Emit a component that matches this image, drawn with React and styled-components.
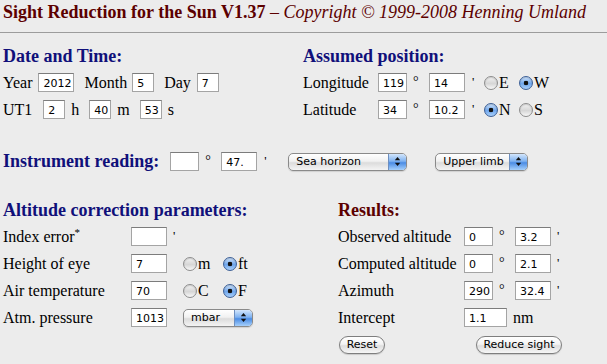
import React from 'react';
import styled, { createGlobalStyle } from 'styled-components';

const GlobalStyle = createGlobalStyle`
  body {
    margin: 0;
    background: #ececec;
    font-family: "Liberation Serif", "Times New Roman", serif;
    font-size: 16px;
    color: #000;
  }
`;

const Page = styled.div`
  padding: 1px 0 0 3px;
  width: 604px;
  height: 363px;
  overflow: hidden;
`;

const Title = styled.h1`
  margin: 0;
  font-size: 18px;
  line-height: 22px;
  font-weight: bold;
  color: #5c0000;
  white-space: nowrap;
`;

const Copyright = styled.span`
  font-style: italic;
  font-weight: normal;
`;

const Rule = styled.div`
  height: 1px;
  margin: 9px 0 0 -3px;
  background: #9c9c9c;
`;

const SectionGrid = styled.div`
  display: grid;
  grid-template-columns: ${p => p.$left}px 1fr;
  margin-top: ${p => p.$top}px;
`;

const Heading = styled.h2`
  margin: 0 0 2px;
  font-size: 18px;
  line-height: 21px;
  font-weight: bold;
  color: ${p => p.$color || '#10107a'};
  white-space: nowrap;
`;

const Row = styled.div`
  display: flex;
  align-items: center;
  height: 27px;
  white-space: nowrap;
`;

const InstrumentRow = styled(Row)`
  margin-top: 25px;
`;

const RowHeading = styled(Heading)`
  margin: 0;
`;

const Label = styled.span`
  flex: none;
  width: ${p => (p.$w ? `${p.$w}px` : 'auto')};
  margin-left: ${p => p.$ml || 0}px;
`;

const Sup = styled.sup`
  font-size: 11px;
  line-height: 0;
`;

const Field = styled.input`
  flex: none;
  box-sizing: border-box;
  width: ${p => p.$w}px;
  height: 19px;
  margin: 0 0 0 ${p => p.$ml || 0}px;
  padding: 1px 0 0 4px;
  border: 1px solid #a4a4a4;
  border-top-color: #7c7c7c;
  background: #fff;
  font-family: "DejaVu Sans", "Liberation Sans", sans-serif;
  font-size: 11px;
  color: #000;
  outline: none;
`;

const Degree = styled.span`
  flex: none;
  box-sizing: border-box;
  width: 22px;
  padding-left: 6px;
  font-size: 14px;
  align-self: flex-start;
  margin-top: 5px;
`;

const Tick = styled.span`
  flex: none;
  box-sizing: border-box;
  width: ${p => p.$w || 10}px;
  padding-left: ${p => p.$pl || 6}px;
  font-size: 13px;
  align-self: flex-start;
  margin-top: 5px;
`;

const Option = styled.span`
  flex: none;
  display: inline-flex;
  align-items: center;
  width: ${p => p.$w}px;
`;

const Radio = styled.span`
  flex: none;
  box-sizing: border-box;
  width: 14px;
  height: 14px;
  margin-right: 1px;
  border-radius: 50%;
  border: 1px solid ${p => (p.$checked ? '#3c5f96' : '#8c8c8c')};
  background: ${p =>
    p.$checked
      ? 'radial-gradient(circle at 50% 50%, #111 0 2px, transparent 2.6px), linear-gradient(#cfe3fb, #6fa6ec 55%, #a9d0fb)'
      : 'linear-gradient(#f2f2f2, #d6d6d6 55%, #f8f8f8)'};
  box-shadow: inset 0 1px 1px rgba(0, 0, 0, 0.15);
`;

const Select = styled.span`
  flex: none;
  box-sizing: border-box;
  display: inline-flex;
  width: ${p => p.$w}px;
  height: 18px;
  margin-left: ${p => p.$ml || 0}px;
  border: 1px solid #8a8a8a;
  border-radius: 5px;
  overflow: hidden;
  background: linear-gradient(#ffffff, #f1f1f1 45%, #dcdcdc 55%, #f4f4f4);
  box-shadow: 0 1px 1px rgba(0, 0, 0, 0.12);
  font-family: "DejaVu Sans", "Liberation Sans", sans-serif;
  font-size: 11px;
`;

const SelectText = styled.span`
  flex: 1;
  padding-left: 7px;
  line-height: 16px;
`;

const SelectArrows = styled.span`
  flex: none;
  display: flex;
  align-items: center;
  justify-content: center;
  width: 17px;
  border-left: 1px solid #6d8fc0;
  background: linear-gradient(#d3e6fc, #7fb2f0 45%, #4b8ce4 55%, #a6d0fb);
`;

const PillButton = styled.button`
  flex: none;
  box-sizing: border-box;
  width: ${p => p.$w}px;
  height: 18px;
  margin: 0 0 0 ${p => p.$ml || 0}px;
  padding: 0;
  border: 1px solid #7e7e7e;
  border-radius: 9px;
  background: linear-gradient(#ffffff, #f3f3f3 45%, #dedede 55%, #f6f6f6);
  box-shadow: 0 1px 1px rgba(0, 0, 0, 0.15);
  font-family: "DejaVu Sans", "Liberation Sans", sans-serif;
  font-size: 11px;
  color: #000;
  line-height: 15px;
`;

const Arrows = () => (
  <svg width="7" height="11" viewBox="0 0 7 11">
    <path d="M3.5 1 L6.2 4.2 H0.8 Z" fill="#111" />
    <path d="M3.5 10 L6.2 6.8 H0.8 Z" fill="#111" />
  </svg>
);

const PopUp = ({ w, ml, children }) => (
  <Select $w={w} $ml={ml}>
    <SelectText>{children}</SelectText>
    <SelectArrows>
      <Arrows />
    </SelectArrows>
  </Select>
);

const Choice = ({ w, checked, children }) => (
  <Option $w={w}>
    <Radio $checked={checked} />
    {children}
  </Option>
);

const Box = ({ w, ml, value = '' }) => <Field $w={w} $ml={ml} value={value} readOnly />;

const App = () => (
  <Page>
    <GlobalStyle />
    <Title>
      Sight Reduction for the Sun V1.37 <Copyright>– Copyright © 1999-2008 Henning Umland</Copyright>
    </Title>
    <Rule />

    <SectionGrid $left={300} $top={13}>
      <div>
        <Heading>Date and Time:</Heading>
        <Row>
          <Label>Year</Label>
          <Box w={36} ml={6} value="2012" />
          <Label $ml={10}>Month</Label>
          <Box w={22} ml={5} value="5" />
          <Label $ml={10}>Day</Label>
          <Box w={22} ml={6} value="7" />
        </Row>
        <Row>
          <Label>UT1</Label>
          <Box w={22} ml={11} value="2" />
          <Label $ml={6}>h</Label>
          <Box w={22} ml={10} value="40" />
          <Label $ml={6}>m</Label>
          <Box w={22} ml={10} value="53" />
          <Label $ml={6}>s</Label>
        </Row>
      </div>
      <div>
        <Heading>Assumed position:</Heading>
        <Row>
          <Label $w={75}>Longitude</Label>
          <Box w={29} value="119" />
          <Degree>°</Degree>
          <Box w={36} value="14" />
          <Tick $w={19} $pl={7}>'</Tick>
          <Choice w={35}>E</Choice>
          <Choice w={30} checked>W</Choice>
        </Row>
        <Row>
          <Label $w={75}>Latitude</Label>
          <Box w={29} value="34" />
          <Degree>°</Degree>
          <Box w={36} value="10.2" />
          <Tick $w={19} $pl={7}>'</Tick>
          <Choice w={35} checked>N</Choice>
          <Choice w={30}>S</Choice>
        </Row>
      </div>
    </SectionGrid>

    <InstrumentRow>
      <RowHeading as="span">Instrument reading:</RowHeading>
      <Box w={29} ml={11} />
      <Degree>°</Degree>
      <Box w={36} value="47." />
      <Tick $w={31} $pl={7}>'</Tick>
      <PopUp w={119}>Sea horizon</PopUp>
      <PopUp w={93} ml={28}>Upper limb</PopUp>
    </InstrumentRow>

    <SectionGrid $left={335} $top={25}>
      <div>
        <Heading>Altitude correction parameters:</Heading>
        <Row>
          <Label $w={128}>
            Index error<Sup>*</Sup>
          </Label>
          <Box w={36} />
          <Tick $w={16}>'</Tick>
        </Row>
        <Row>
          <Label $w={128}>Height of eye</Label>
          <Box w={36} value="7" />
          <Tick $w={16} />
          <Choice w={40}>m</Choice>
          <Choice w={30} checked>ft</Choice>
        </Row>
        <Row>
          <Label $w={128}>Air temperature</Label>
          <Box w={36} value="70" />
          <Tick $w={16} />
          <Choice w={40}>C</Choice>
          <Choice w={30} checked>F</Choice>
        </Row>
        <Row>
          <Label $w={128}>Atm. pressure</Label>
          <Box w={36} value="1013" />
          <Tick $w={16} />
          <PopUp w={70}>mbar</PopUp>
        </Row>
      </div>
      <div>
        <Heading $color="#5c0000">Results:</Heading>
        <Row>
          <Label $w={126}>Observed altitude</Label>
          <Box w={29} value="0" />
          <Degree>°</Degree>
          <Box w={36} value="3.2" />
          <Tick>'</Tick>
        </Row>
        <Row>
          <Label $w={126}>Computed altitude</Label>
          <Box w={29} value="0" />
          <Degree>°</Degree>
          <Box w={36} value="2.1" />
          <Tick>'</Tick>
        </Row>
        <Row>
          <Label $w={126}>Azimuth</Label>
          <Box w={29} value="290" />
          <Degree>°</Degree>
          <Box w={36} value="32.4" />
          <Tick>'</Tick>
        </Row>
        <Row>
          <Label $w={126}>Intercept</Label>
          <Box w={43} value="1.1" />
          <Label $ml={6}>nm</Label>
        </Row>
        <Row>
          <PillButton $w={46} $ml={1}>Reset</PillButton>
          <PillButton $w={86} $ml={91}>Reduce sight</PillButton>
        </Row>
      </div>
    </SectionGrid>
  </Page>
);

export default App;
